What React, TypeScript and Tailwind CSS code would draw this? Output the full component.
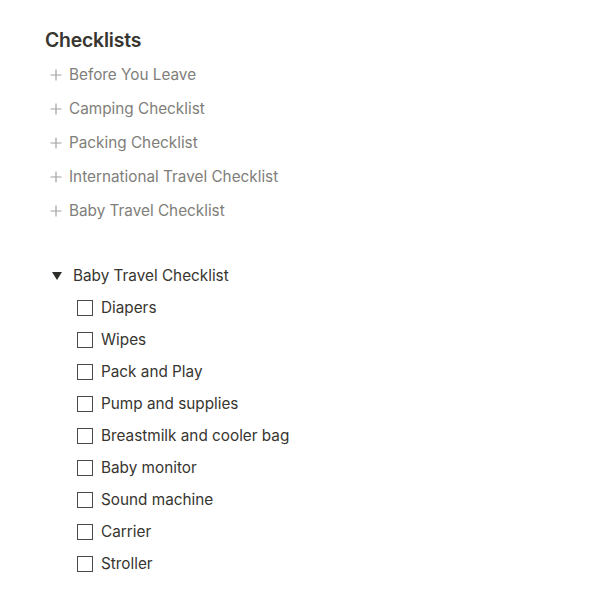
const lists = [
  'Before You Leave',
  'Camping Checklist',
  'Packing Checklist',
  'International Travel Checklist',
  'Baby Travel Checklist',
];

const babyItems = [
  'Diapers',
  'Wipes',
  'Pack and Play',
  'Pump and supplies',
  'Breastmilk and cooler bag',
  'Baby monitor',
  'Sound machine',
  'Carrier',
  'Stroller',
];

export default function App() {
  return (
    <div className="min-h-screen w-full bg-white text-[#37352f] font-['Inter',sans-serif]">
      <div className="pl-[45px] pt-[27px]">
        <h2 className="text-[19.4px] leading-[26px] font-semibold tracking-[-0.2px]">Checklists</h2>

        {/* Template buttons */}
        <div className="mt-[5px] flex flex-col">
          {lists.map((name) => (
            <div key={name} className="flex items-center h-[34px] text-[#7f7e7a]">
              <svg viewBox="0 0 12 12" className="w-[12px] h-[12px] ml-[5px] mr-[7px] stroke-[#a3a29e]" strokeWidth={1.2} fill="none">
                <path d="M6 0.5V11.5M0.5 6H11.5" />
              </svg>
              <span className="text-[15.3px] leading-[24px]">{name}</span>
            </div>
          ))}
        </div>

        {/* Toggle */}
        <div className="mt-[32px] flex items-center h-[32px]">
          <svg viewBox="0 0 10 8" className="w-[10px] h-[8px] ml-[7px] mr-[11px] fill-[#2f2e2a]">
            <polygon points="0,0 10,0 5,8" />
          </svg>
          <span className="text-[15.3px] leading-[24px]">Baby Travel Checklist</span>
        </div>

        <div className="flex flex-col pl-[32px]">
          {babyItems.map((item) => (
            <div key={item} className="flex items-center h-[32px]">
              <div className="w-[16px] h-[16px] border-[1.5px] border-[#4a4945] mr-[8px] shrink-0" />
              <span className="text-[15.3px] leading-[24px]">{item}</span>
            </div>
          ))}
        </div>
      </div>
    </div>
  );
}
